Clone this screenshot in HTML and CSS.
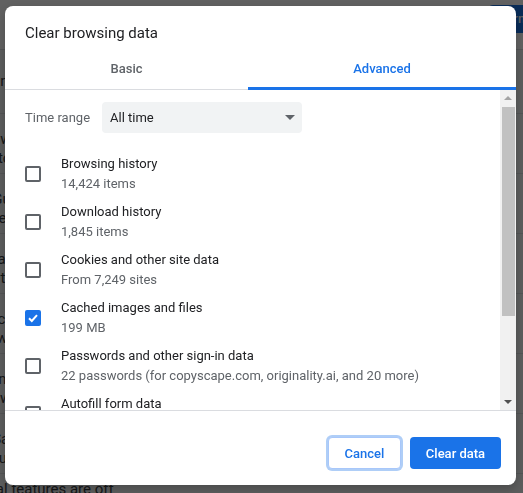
FILE: index.html
```html
<!DOCTYPE html>
<html lang="en">
  <head>
    <meta charset="UTF-8" />
    <meta name="viewport" content="width=device-width, initial-scale=1.0" />
    <title>Clear browsing data</title>
    <link rel="stylesheet" href="styles.css">
  </head>
  <body>
    <!-- Settings page behind the dialog -->
    <div class="page">
      <div class="topbar">
        <span class="sync-btn">Turn on</span>
      </div>
      <div class="settings-list">
        <div class="setting-row">
          <div>Privacy and security</div>
        </div>
        <div class="setting-row">
          <div>Clear browsing data</div>
          <div>Clear history, cookies, cache</div>
        </div>
        <div class="setting-row">
          <div>Privacy Guide</div>
          <div>Review key privacy controls</div>
        </div>
        <div class="setting-row">
          <div>Cookies and site data</div>
          <div>Third-party cookies</div>
        </div>
        <div class="setting-row">
          <div>Security checks</div>
          <div>Safe Browsing</div>
        </div>
        <div class="setting-row">
          <div>Site settings</div>
          <div>Controls what sites can use</div>
        </div>
        <div class="setting-row">
          <div>Privacy Sandbox</div>
          <div>Trial features are off</div>
        </div>
        <div class="setting-row last">
          <div>Additional features are off</div>
        </div>
      </div>
    </div>

    <div class="scrim"></div>

    <div class="dialog">
      <h1 class="dialog-title">Clear browsing data</h1>

      <div class="tabs">
        <a href="#" class="tab tab-basic">Basic</a>
        <a href="#" class="tab active">Advanced</a>
      </div>

      <div class="dialog-body">
        <div class="body-content">
          <div class="time-range">
            <span class="time-label">Time range</span>
            <div class="select">
              <span>All time</span>
              <span class="select-arrow"></span>
            </div>
          </div>

          <div class="option">
            <span class="checkbox"></span>
            <div>
              <div class="option-label">Browsing history</div>
              <div class="option-sub">14,424 items</div>
            </div>
          </div>
          <div class="option">
            <span class="checkbox"></span>
            <div>
              <div class="option-label">Download history</div>
              <div class="option-sub">1,845 items</div>
            </div>
          </div>
          <div class="option">
            <span class="checkbox"></span>
            <div>
              <div class="option-label">Cookies and other site data</div>
              <div class="option-sub">From 7,249 sites</div>
            </div>
          </div>
          <div class="option">
            <span class="checkbox checked">
              <svg width="12" height="12" viewBox="0 0 12 12">
                <polyline points="2,6.2 4.8,9 10,3.2" fill="none" stroke="#fff" stroke-width="2" />
              </svg>
            </span>
            <div>
              <div class="option-label">Cached images and files</div>
              <div class="option-sub">199 MB</div>
            </div>
          </div>
          <div class="option">
            <span class="checkbox"></span>
            <div>
              <div class="option-label">Passwords and other sign-in data</div>
              <div class="option-sub">22 passwords (for copyscape.com, originality.ai, and 20 more)</div>
            </div>
          </div>
          <div class="option">
            <span class="checkbox"></span>
            <div>
              <div class="option-label">Autofill form data</div>
              <div class="option-sub">3 addresses, 212 other suggestions</div>
            </div>
          </div>
        </div>

        <!-- scrollbar: arrows and thumb -->
        <div class="scrollbar">
          <div class="scroll-btn"><span class="arrow-up"></span></div>
          <div class="scroll-track">
            <div class="scroll-thumb"></div>
          </div>
          <div class="scroll-btn"><span class="arrow-down"></span></div>
        </div>
      </div>

      <div class="dialog-footer">
        <button class="btn btn-cancel">Cancel</button>
        <button class="btn btn-primary">Clear data</button>
      </div>
    </div>
  </body>
</html>
```

FILE: styles.css
```css
body {
  font-family: Roboto, "Liberation Sans", sans-serif;
  margin: 0;
  padding: 0;
  font-size: 13px;
  color: #202124;
  overflow: hidden;
}

/* background page */
.page {
  height: 493px;
  overflow: hidden;
  background-color: #f1f3f4;
  color: #3c4043;
}

.topbar {
  display: flex;
  justify-content: flex-end;
  height: 50px;
  padding-top: 5px;
  box-sizing: border-box;
  background-color: #fff;
  border-bottom: 1px solid #dadce0;
  overflow: hidden;
}

.sync-btn {
  height: 28px;
  line-height: 28px;
  padding: 0 12px;
  margin-right: -32px;
  background-color: #1a73e8;
  color: #fff;
  border-radius: 6px;
  font-weight: 500;
  white-space: nowrap;
}

.settings-list {
  margin-left: -60px;
  padding-top: 6px;
  font-size: 15px;
}

.setting-row {
  height: 60px;
  padding-top: 16px;
  box-sizing: border-box;
  border-bottom: 1px solid #dadce0;
  line-height: 19px;
  white-space: nowrap;
}

.setting-row:first-child {
  height: 58px;
}

.setting-row.last {
  padding-top: 6px;
  border-bottom: none;
}

.scrim {
  position: fixed;
  inset: 0;
  background-color: rgba(0, 0, 0, 0.62);
}

/* dialog */
.dialog {
  position: absolute;
  left: 5px;
  top: 6px;
  width: 511px;
  height: 479px;
  background-color: #fff;
  border-radius: 8px;
  box-shadow: 0 4px 10px rgba(0, 0, 0, 0.2);
  overflow: hidden;
}

.dialog-title {
  margin: 0;
  padding: 16px 20px 0;
  font-size: 15px;
  font-weight: 400;
  line-height: 22px;
  color: #202124;
}

.tabs {
  display: flex;
  border-bottom: 1px solid #dadce0;
}

.tab {
  flex: 1;
  text-align: center;
  padding: 15px 0 8px;
  line-height: 20px;
  margin-bottom: -1px;
  border-bottom: 3px solid transparent;
  color: #5f6368;
  font-weight: 500;
  text-decoration: none;
}

.tab-basic {
  flex: 0 0 243px;
}

.tab.active {
  color: #1a73e8;
  border-bottom-color: #1a73e8;
}

.dialog-body {
  display: flex;
  height: 320px;
  border-bottom: 1px solid #dadce0;
}

.body-content {
  flex: 1;
  overflow: hidden;
  padding-left: 20px;
}

.time-range {
  display: flex;
  align-items: center;
  padding: 12px 0 17px;
}

.time-label {
  width: 77px;
  color: #5f6368;
}

.select {
  display: flex;
  align-items: center;
  justify-content: space-between;
  width: 200px;
  height: 31px;
  padding: 0 7px 0 8px;
  box-sizing: border-box;
  background-color: #f1f3f4;
  border-radius: 4px;
}

.select-arrow {
  width: 0;
  height: 0;
  border-left: 5px solid transparent;
  border-right: 5px solid transparent;
  border-top: 5px solid #5f6368;
}

.option {
  display: flex;
  align-items: center;
  height: 48px;
}

.checkbox {
  display: flex;
  align-items: center;
  justify-content: center;
  width: 16px;
  height: 16px;
  box-sizing: border-box;
  border: 2px solid #5f6368;
  border-radius: 2px;
  margin-right: 20px;
  flex-shrink: 0;
}

.checkbox.checked {
  background-color: #1a73e8;
  border-color: #1a73e8;
}

.option-label {
  line-height: 20px;
  color: #202124;
  white-space: nowrap;
}

.option-sub {
  line-height: 20px;
  color: #5f6368;
  white-space: nowrap;
}

/* scrollbar */
.scrollbar {
  display: flex;
  flex-direction: column;
  width: 16px;
  background-color: #f1f1f1;
}

.scroll-btn {
  display: flex;
  align-items: center;
  justify-content: center;
  height: 16px;
}

.arrow-up {
  width: 0;
  height: 0;
  border-left: 4px solid transparent;
  border-right: 4px solid transparent;
  border-bottom: 4px solid #a3a3a3;
}

.arrow-down {
  width: 0;
  height: 0;
  border-left: 4px solid transparent;
  border-right: 4px solid transparent;
  border-top: 4px solid #505050;
}

.scroll-track {
  flex: 1;
  padding: 1px 1px 0 2px;
}

.scroll-thumb {
  height: 209px;
  background-color: #c1c1c1;
}

.dialog-footer {
  display: flex;
  justify-content: flex-end;
  gap: 9px;
  padding: 26px 15px 16px;
}

.btn {
  height: 32px;
  padding: 0;
  border-radius: 4px;
  font-family: Roboto, "Liberation Sans", sans-serif;
  font-size: 13px;
  font-weight: 500;
  white-space: nowrap;
  cursor: pointer;
}

.btn-cancel {
  background-color: #fff;
  color: #1a73e8;
  border: 1px solid #a8c7fa;
  box-shadow: 0 0 0 2px rgba(26, 115, 232, 0.35);
  width: 73px;
}

.btn-primary {
  background-color: #1a73e8;
  color: #fff;
  border: none;
  width: 91px;
}
```
